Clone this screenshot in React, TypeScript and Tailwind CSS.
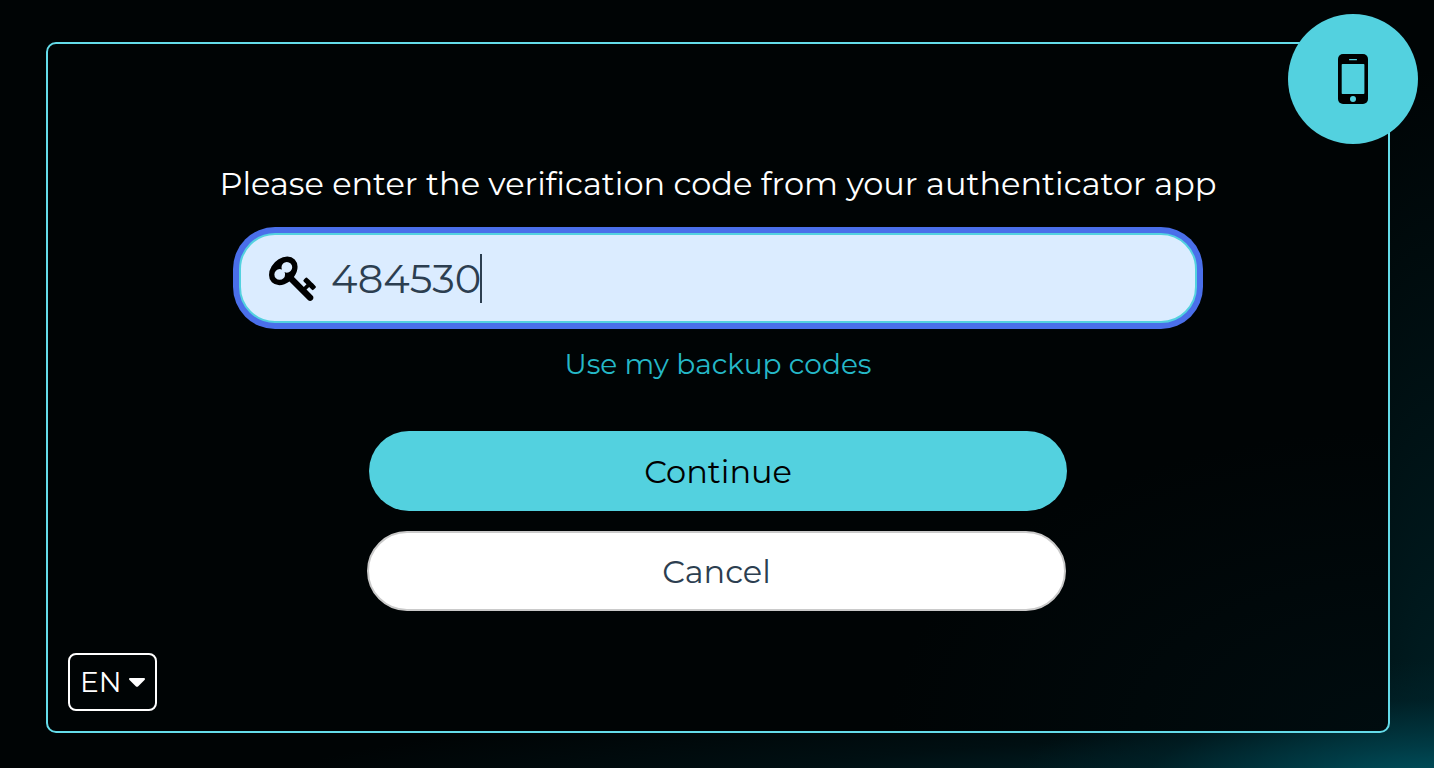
const KeyIcon = () => (
  <svg className="h-[50px] w-[50px] shrink-0" viewBox="0 0 1792 1792" fill="#000">
    <path d="M832 512q0-80-56-136t-136-56-136 56-56 136q0 42 19 83-41-19-83-19-80 0-136 56t-56 136 56 136 136 56 136-56 56-136q0-42-19-83 41 19 83 19 80 0 136-56t56-136zm851 704q0 17-49 66t-66 49q-9 0-28.500-16t-36.500-33-38.500-40-24.500-26l-96 96 220 220q28 28 28 68 0 42-39 81t-81 39q-40 0-68-28l-671-671q-176 131-365 131-163 0-265.500-102.500t-102.500-265.500q0-160 95-313t248-248 313-95q163 0 265.500 102.500t102.500 265.500q0 189-131 365l355 355 96-96q-3-3-26-24.500t-40-38.500-33-36.500-16-28.500q0-17 49-66t66-49q13 0 23 10 6 6 46 44.500t82 79.500 86.500 86 73 78 28.500 41z" />
  </svg>
);

const PhoneIcon = () => (
  <svg className="h-[50px] w-[30px]" viewBox="0 0 30 50">
    <rect width="30" height="50" rx="5" fill="#000" />
    <rect x="11" y="5.1" width="8" height="1.1" rx="0.5" fill="#53d1df" />
    <rect x="3.7" y="10" width="22.7" height="30" rx="0.8" fill="#53d1df" />
    <circle cx="15" cy="45" r="3" fill="#53d1df" />
  </svg>
);

export default function App() {
  return (
    <main className="h-[768px] w-[1434px] overflow-hidden bg-[#000405] bg-[radial-gradient(ellipse_420px_130px_at_100%_103%,#005866_0%,#00414ccc_35%,#00252c80_70%,transparent_100%),radial-gradient(ellipse_1200px_110px_at_100%_104%,#002f38_0%,#001a1f80_60%,transparent_100%),radial-gradient(ellipse_180px_700px_at_100%_100%,#001f24_0%,transparent_100%)] pt-[42px] pl-[46px] font-['Montserrat','Inter',sans-serif] font-normal">
      <section className="relative flex h-[691px] w-[1344px] flex-col items-center rounded-[10px] border-2 border-[#64dcea] bg-[#000405] bg-[radial-gradient(ellipse_500px_300px_at_100%_100%,#000c0f_0%,transparent_100%)]">
        <div className="absolute -top-[30px] -right-[30px] flex size-[130px] items-center justify-center rounded-full bg-[#53d1df]">
          <PhoneIcon />
        </div>
        <h1 className="mt-[120px] text-[32px] leading-10 whitespace-nowrap text-white">
          Please enter the verification code from your authenticator app
        </h1>
        <div className="mt-[29px] flex h-[90px] w-[958px] items-center rounded-[36px] border-2 border-[#53d1df] bg-[#dbecff] pl-7 ring-6 ring-[#4a6fea]">
          <KeyIcon />
          <span className="ml-3 pt-0.5 text-[40px] leading-[50px] text-[#2c3e50]">484530</span>
          <span className="-ml-px h-[49px] w-0.5 bg-[#2c3e50]" />
        </div>
        <a className="mt-[23px] text-[28px] leading-9 text-[#25b8c8]">Use my backup codes</a>
        <button className="mt-[49px] h-20 w-[698px] rounded-full bg-[#53d1df] pt-0.5 text-[32px] text-black">
          Continue
        </button>
        <button className="mt-5 mr-[3px] h-20 w-[699px] rounded-full border-2 border-[#cacaca] bg-white pt-0.5 text-[32px] text-[#2c3e50]">
          Cancel
        </button>
        <button className="mt-[42px] ml-5 flex h-[58px] w-[89px] items-center gap-[7px] self-start rounded-lg border-2 border-white pl-[10px] text-[28px] text-white">
          <span>EN</span>
          <svg className="h-[9px] w-4 shrink-0" viewBox="0 0 16 9" fill="#fff">
            <path d="M0 1Q0 0 1 0H15Q16 0 16 1Q16 1.400 15.500 1.900L9 8.400Q8 9.300 7 8.400L.5 1.900Q0 1.400 0 1Z" />
          </svg>
        </button>
      </section>
    </main>
  );
}
